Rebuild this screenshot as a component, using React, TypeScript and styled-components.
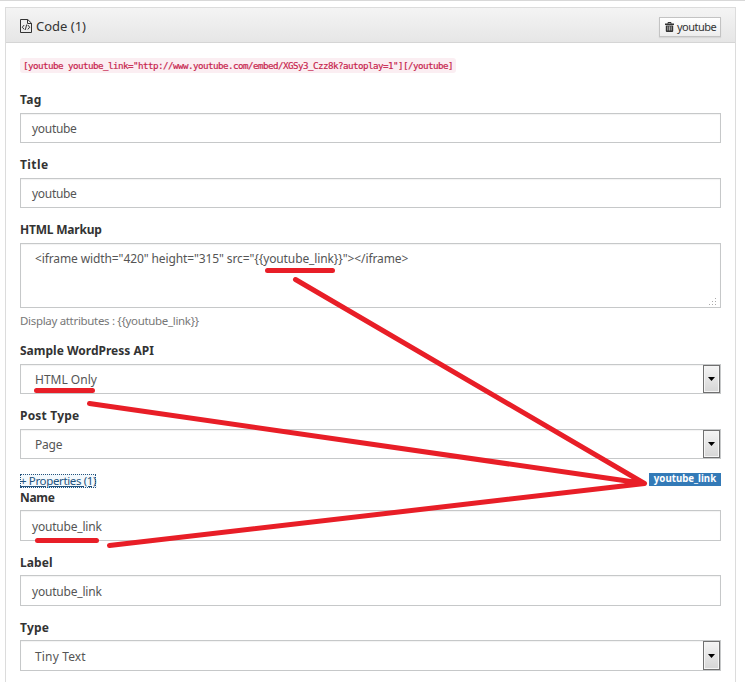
import React from "react";
import styled, { createGlobalStyle } from "styled-components";

const GlobalStyle = createGlobalStyle`
  * { box-sizing: border-box; }
  body {
    margin: 0;
    background: #fff;
    color: #333;
    font: 12px/16px "Noto Sans", "Open Sans", sans-serif;
    overflow: hidden;
  }
`;

const Page = styled.div`
  position: relative;
  height: 682px;
  overflow: hidden;
  border-top: 1px solid #d8d8d8;
  padding: 6px 9px 0 5px;
`;

const Panel = styled.section`
  height: 700px;
  border: 1px solid #dcdcdc;
`;

const PanelHeader = styled.header`
  display: flex;
  align-items: center;
  justify-content: space-between;
  height: 35px;
  padding: 2px 14px 0;
  background: linear-gradient(#f4f4f4, #e6e6e6);
  border-bottom: 1px solid #d5d5d5;
`;

const PanelTitle = styled.h1`
  display: flex;
  align-items: center;
  gap: 4px;
  margin: 0;
  font-size: 13px;
  font-weight: 400;
`;

const SmallButton = styled.button`
  display: flex;
  align-items: center;
  gap: 3px;
  width: 62px;
  height: 20px;
  margin-top: 1px;
  padding: 1px 0 1px 5px;
  color: #333;
  font: 11px/16px "Noto Sans", sans-serif;
  letter-spacing: -0.5px;
  background: linear-gradient(#fff, #ededed);
  border: 1px solid #c3c3c3;
  box-shadow: 0 1px 1px rgba(0, 0, 0, 0.07);
`;

const PanelBody = styled.div`
  padding: 0 14px;
`;

const CodeRow = styled.div`
  display: flex;
  align-items: center;
  height: 45px;
`;

const Code = styled.code`
  width: 436px;
  height: 15px;
  padding: 1px 3px 0;
  color: #c7254e;
  background: #fbeef2;
  border-radius: 3px;
  font: 9.2px/14px "DejaVu Sans Mono", monospace;
  letter-spacing: -0.53px;
  -webkit-text-stroke: 0.2px #c7254e;
  white-space: nowrap;
`;

const Label = styled.label<{ $spacing?: number; $gap?: number; $drop?: number }>`
  display: block;
  height: 25px;
  margin-top: ${(p) => p.$gap ?? 0}px;
  padding-top: ${(p) => 4 + (p.$drop ?? 0)}px;
  font-weight: 700;
  letter-spacing: ${(p) => p.$spacing ?? 0}px;
`;

const Control = styled.div<{ $height?: number; $indent?: number; $spacing?: number }>`
  display: flex;
  justify-content: space-between;
  height: ${(p) => p.$height ?? 30}px;
  padding: 1px 0 1px ${(p) => p.$indent ?? 11}px;
  color: #555;
  line-height: ${(p) => (p.$height === 31 ? 29 : 27)}px;
  letter-spacing: ${(p) => p.$spacing ?? 0}px;
  white-space: pre;
  background: #fff;
  border: 1px solid #c6c8c9;
  box-shadow: inset 0 1px 1px rgba(0, 0, 0, 0.05);
`;

const SelectArrow = styled.span`
  display: flex;
  align-items: center;
  justify-content: center;
  width: 17px;
  margin: -1px 0;
  background: linear-gradient(#f4f4f4, #d6d6d6);
  border: 1px solid #707070;
  box-shadow: inset 0 0 0 1px #f5f5f5;
`;

const Grip = styled.svg`
  align-self: flex-end;
  margin: 0 3px 0 0;
`;

const Help = styled.div`
  height: 31px;
  padding-top: 5px;
  color: #777;
  font-size: 11.5px;
  letter-spacing: -0.32px;
`;

const PropertiesRow = styled.div`
  display: flex;
  justify-content: space-between;
  align-items: flex-start;
  height: 26px;
  padding-top: 14px;
`;

const PropertiesLink = styled.a`
  width: 76px;
  height: 14px;
  margin-top: 1px;
  color: #23527c;
  font-size: 11.5px;
  line-height: 13px;
  letter-spacing: -0.36px;
  white-space: nowrap;
  text-decoration: underline;
  background: #f3f9fd;
  outline: 1px dotted #23527c;
  outline-offset: -1px;
`;

const Badge = styled.span`
  width: 72px;
  height: 13px;
  color: #fff;
  background: #337ab7;
  font-size: 9.7px;
  font-weight: 700;
  line-height: 12px;
  text-align: center;
`;

const Annotations = styled.svg`
  position: absolute;
  left: 0;
  top: -1px;
  pointer-events: none;
`;

const FileCodeIcon = () => (
  <svg width="12" height="14" viewBox="0 0 12 14" fill="none" stroke="#333" strokeWidth="1">
    <path d="M.5.5h7.2l3.8 3.7v9.3H.5zM7.5.5v4h4" />
    <path d="M4.2 6 2.3 8.2l1.9 2.2M7.8 6l1.9 2.2-1.9 2.2M6.7 5.5l-1.4 5.4" />
  </svg>
);

const TrashIcon = () => (
  <svg width="9" height="10" viewBox="0 0 9 10">
    <path d="M3 1.8V.5h3v1.3" fill="none" stroke="#333" />
    <path d="M0 1.5h9v1.4H0zM.8 3.4h7.4V9q0 1-1 1H1.8q-1 0-1-1z" fill="#333" />
    <path d="M2.8 4.3v4.2M4.5 4.3v4.2M6.2 4.3v4.2" stroke="#ddd" strokeWidth=".7" />
  </svg>
);

const Select = ({ value, height, spacing }: { value: string; height?: number; spacing?: number }) => (
  <Control $indent={14} $height={height} $spacing={spacing}>
    {value}
    <SelectArrow>
      <svg width="7" height="4" viewBox="0 0 7 4">
        <path d="M0 0h7L3.5 4z" fill="#000" />
      </svg>
    </SelectArrow>
  </Control>
);

export default function App() {
  return (
    <>
      <GlobalStyle />
      <Page>
        <Panel>
          <PanelHeader>
            <PanelTitle>
              <FileCodeIcon />
              Code (1)
            </PanelTitle>
            <SmallButton>
              <TrashIcon />
              youtube
            </SmallButton>
          </PanelHeader>
          <PanelBody>
            <CodeRow>
              <Code>[youtube youtube_link="http://www.youtube.com/embed/XGSy3_Czz8k?autoplay=1"][/youtube]</Code>
            </CodeRow>
            <Label $spacing={0.3}>Tag</Label>
            <Control $spacing={-0.3}>youtube</Control>
            <Label $gap={10} $spacing={0.4}>Title</Label>
            <Control $spacing={-0.3}>youtube</Control>
            <Label $gap={10} $spacing={-0.2}>HTML Markup</Label>
            <Control $height={65} $indent={14} $spacing={-0.11}>
              {'<iframe width="420" height="315" src="{{youtube_link}}"></iframe>'}
              <Grip width="8" height="8" viewBox="0 0 8 8" fill="#aaa">
                <path d="M6 0h1v1H6zM3 3h1v1H3zM6 3h1v1H6zM0 6h1v1H0zM3 6h1v1H3zM6 6h1v1H6z" />
              </Grip>
            </Control>
            <Help>{"Display attributes : {{youtube_link}}"}</Help>
            <Label>Sample WordPress API</Label>
            <Select value="HTML Only" spacing={0} />
            <Label $gap={10} $spacing={0.2}>Post Type</Label>
            <Select value="Page" spacing={-0.2} />
            <PropertiesRow>
              <PropertiesLink>+ Properties (1)</PropertiesLink>
              <Badge>youtube_link</Badge>
            </PropertiesRow>
            <Label $drop={1} $spacing={-0.3}>Name</Label>
            <Control $height={31} $spacing={-0.2}>youtube_link</Control>
            <Label $gap={9} $drop={1} $spacing={0.1}>Label</Label>
            <Control $height={31} $spacing={-0.2}>youtube_link</Control>
            <Label $gap={9} $drop={1} $spacing={0.2}>Type</Label>
            <Select value="Tiny Text" height={31} spacing={0.15} />
          </PanelBody>
        </Panel>
        <Annotations
          width="745"
          height="682"
          viewBox="0 0 745 682"
          fill="none"
          stroke="#e81e27"
          strokeWidth="5"
          strokeLinecap="round"
          strokeLinejoin="round"
        >
          <path d="M267.5 270.5h65M36.5 390.5h56M37.5 540.5h59" />
          <path d="M295.5 279.5 644.5 483.5 89.5 403.5M644.5 483.5 109.5 545.5" />
        </Annotations>
      </Page>
    </>
  );
}
